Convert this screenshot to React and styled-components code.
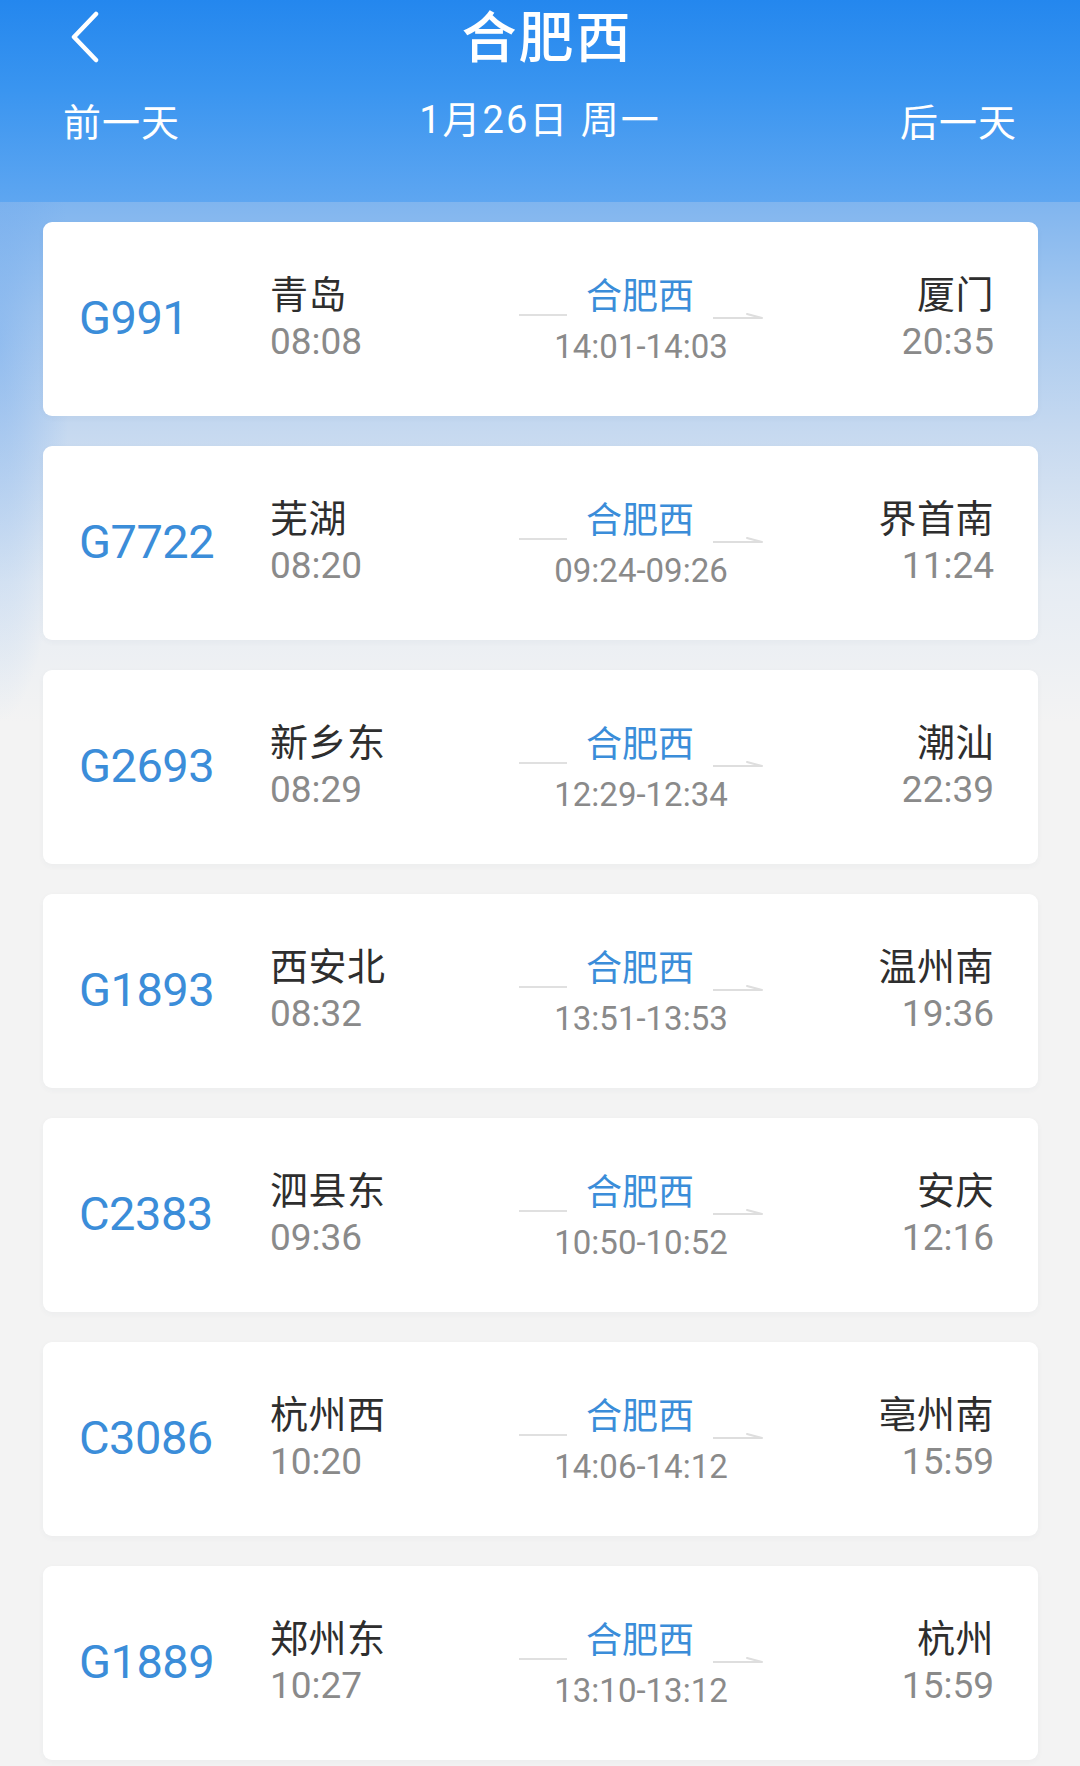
import React from "react";
import styled, { createGlobalStyle } from "styled-components";

const Global = createGlobalStyle`
  html, body { margin: 0; padding: 0; background: #f3f3f3; }
  body { font-family: "Noto Sans CJK SC", sans-serif; -webkit-font-smoothing: antialiased; }
  * { box-sizing: border-box; }
`;

const Page = styled.div`
  width: 1080px;
  min-height: 1766px;
  display: flex;
  flex-direction: column;
  background: #f3f3f3;
`;

const Header = styled.header`
  height: 202px;
  padding: 0 63px;
  display: flex;
  flex-direction: column;
  color: #fff;
  background: linear-gradient(180deg, #2487ee 0%, #3a95f0 45%, #5ea6f1 100%);
`;

const NavBar = styled.div`
  height: 66px;
  display: grid;
  grid-template-columns: 1fr auto 1fr;
  align-items: center;
`;

const BackButton = styled.button`
  justify-self: start;
  margin: 8px 0 0 7px;
  padding: 0;
  border: none;
  background: none;
  width: 30px;
  height: 52px;
  display: flex;
  align-items: center;
  justify-content: center;
`;

const Title = styled.h1`
  margin: 0 0 0 14px;
  font-family: "Noto Sans CJK SC", sans-serif;
  font-size: 55px;
  line-height: 66px;
  font-weight: 500;
  letter-spacing: 2px;
  color: #fff;
`;

const DateRow = styled.div`
  margin-top: 32px;
  height: 44px;
  display: flex;
  justify-content: space-between;
  align-items: center;
`;

const DayLink = styled.span`
  font-family: "Noto Sans CJK SC", sans-serif;
  font-size: 38px;
  line-height: 44px;
  font-weight: 400;
  letter-spacing: 1px;
`;

const DateText = styled.span`
  font-family: "Roboto", "Noto Sans CJK SC", sans-serif;
  font-size: 38px;
  line-height: 44px;
  font-weight: 400;
  letter-spacing: 2px;
`;

const List = styled.main`
  flex: 1;
  padding: 20px 42px 6px 43px;
  display: flex;
  flex-direction: column;
  gap: 30px;
  background:
    radial-gradient(ellipse 70px 380px at 0 140px, rgba(110, 168, 238, 0.45), rgba(110, 168, 238, 0)),
    linear-gradient(180deg, #80b5ef 0px, #a7c9ef 110px, #c6d9f0 230px, #e6ecf3 380px, #f3f3f3 520px);
`;

const Card = styled.section`
  height: 194px;
  background: #fff;
  border-radius: 9px;
  box-shadow: 0 2px 6px rgba(40, 70, 110, 0.04);
  padding: 0 44px 0 36px;
  display: grid;
  grid-template-columns: 191px 230px 282px 1fr;
  align-items: center;
`;

const TrainNo = styled.div`
  font-family: "Roboto", sans-serif;
  font-size: 47px;
  line-height: 56px;
  letter-spacing: -0.5px;
  color: #3b8dd9;
  margin-top: -2px;
`;

const Stop = styled.div`
  display: flex;
  flex-direction: column;
  gap: 5px;
  padding-bottom: 6px;
  align-items: ${(p) => (p.$end ? "flex-end" : "flex-start")};
`;

const StationName = styled.div`
  font-family: "Noto Sans CJK SC", sans-serif;
  font-size: 38px;
  line-height: 46px;
  color: #2e2e2e;
  letter-spacing: 0.5px;
`;

const Time = styled.div`
  font-family: "Roboto", sans-serif;
  font-size: 37px;
  line-height: 44px;
  color: #8a8a8a;
`;

const Via = styled.div`
  display: flex;
  flex-direction: column;
  align-items: center;
`;

const ViaRow = styled.div`
  display: flex;
  align-items: flex-end;
  gap: 19px;
`;

const Line = styled.div`
  width: 48px;
  height: 2px;
  background: #e0e0e0;
  margin-bottom: -2px;
`;

const ArrowWrap = styled.div`
  width: 50px;
  height: 8px;
  margin-bottom: -5px;
  display: flex;
`;

const ViaName = styled.div`
  font-family: "Noto Sans CJK SC", sans-serif;
  font-size: 36px;
  line-height: 42px;
  color: #3b8dd9;
`;

const ViaTime = styled.div`
  margin-top: 13px;
  font-family: "Roboto", sans-serif;
  font-size: 33px;
  line-height: 40px;
  color: #8a8a8a;
`;

const trains = [
  ["G991", "青岛", "08:08", "14:01-14:03", "厦门", "20:35"],
  ["G7722", "芜湖", "08:20", "09:24-09:26", "界首南", "11:24"],
  ["G2693", "新乡东", "08:29", "12:29-12:34", "潮汕", "22:39"],
  ["G1893", "西安北", "08:32", "13:51-13:53", "温州南", "19:36"],
  ["C2383", "泗县东", "09:36", "10:50-10:52", "安庆", "12:16"],
  ["C3086", "杭州西", "10:20", "14:06-14:12", "亳州南", "15:59"],
  ["G1889", "郑州东", "10:27", "13:10-13:12", "杭州", "15:59"],
];

function Arrow() {
  return (
    <ArrowWrap>
      <svg width="50" height="8" viewBox="0 0 50 8">
        <path d="M0 7 H49 M34 3 L49 7" stroke="#dedede" strokeWidth="2" fill="none" strokeLinecap="round" />
      </svg>
    </ArrowWrap>
  );
}

function TrainCard({ t }) {
  const [no, from, dep, via, to, arr] = t;
  return (
    <Card>
      <TrainNo>{no}</TrainNo>
      <Stop>
        <StationName>{from}</StationName>
        <Time>{dep}</Time>
      </Stop>
      <Via>
        <ViaRow>
          <Line />
          <ViaName>合肥西</ViaName>
          <Arrow />
        </ViaRow>
        <ViaTime>{via}</ViaTime>
      </Via>
      <Stop $end>
        <StationName>{to}</StationName>
        <Time>{arr}</Time>
      </Stop>
    </Card>
  );
}

export default function App() {
  return (
    <>
      <Global />
      <Page>
        <Header>
          <NavBar>
            <BackButton aria-label="返回">
              <svg width="30" height="52" viewBox="0 0 30 52">
                <polyline points="26,3 4,26 26,49" fill="none" stroke="#fff" strokeWidth="4.5" strokeLinecap="round" strokeLinejoin="round" />
              </svg>
            </BackButton>
            <Title>合肥西</Title>
            <span />
          </NavBar>
          <DateRow>
            <DayLink>前一天</DayLink>
            <DateText>1月26日 周一</DateText>
            <DayLink>后一天</DayLink>
          </DateRow>
        </Header>
        <List>
          {trains.map((t) => (
            <TrainCard key={t[0]} t={t} />
          ))}
        </List>
      </Page>
    </>
  );
}
